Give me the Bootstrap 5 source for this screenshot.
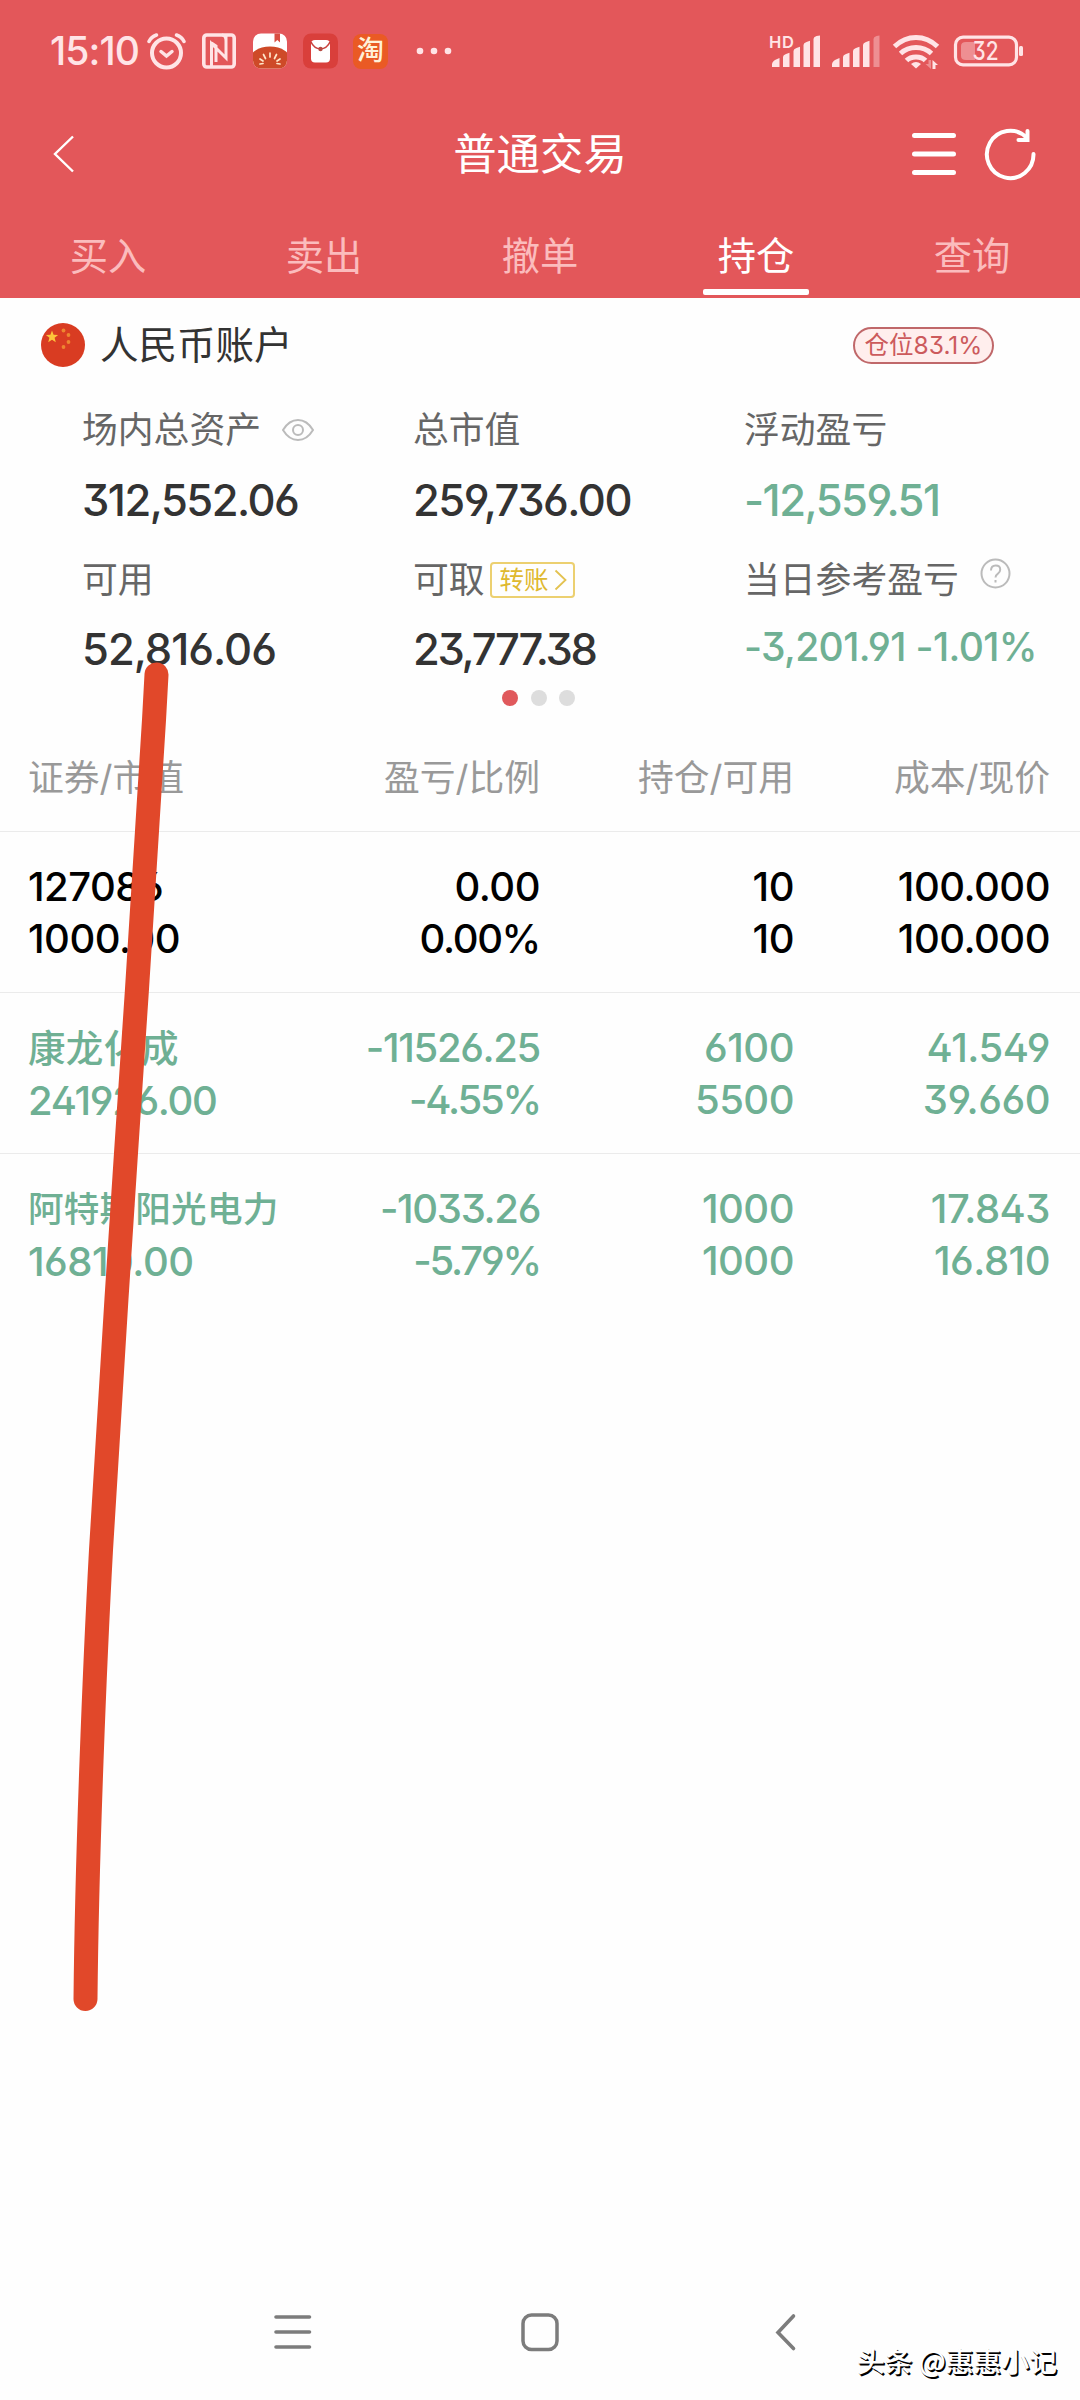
<!DOCTYPE html>
<html lang="zh-CN">
<head>
<meta charset="utf-8">
<meta name="viewport" content="width=device-width, initial-scale=1">
<title>普通交易</title>
<link href="https://cdn.jsdelivr.net/npm/bootstrap@5.3.0/dist/css/bootstrap.min.css" rel="stylesheet">
<style>
body{font-family:Inter,"Noto Sans CJK SC",sans-serif;background:#fefefe;color:#333;font-feature-settings:"ss01","cv03","cv04","cv09"}
svg{display:block;flex:none}
.screen{width:1080px;height:2400px;overflow:hidden}
.topbar{background:#e3575a;color:#fff}
.status{height:102px;padding-left:50px;color:#ffe4e6}
.clock{font-size:39px;font-weight:500;line-height:40px;width:97px;letter-spacing:-.9px}
.app-tao{width:35px;height:35px;border-radius:8px;background:#ea5a24;color:#fff1d8;font-size:27px;line-height:34px;font-weight:500}
.titlebar{height:104px}
.titlebar h1{font-size:43.4px;line-height:60px;font-weight:400}
.tabs{height:92px}
.tabs .nav-link{width:216px;padding:8px 0 0;font-size:38.3px;line-height:40px;color:#fbbcbd;border-radius:0}
.tabs .nav-link.active{color:#fff}
.tabs .nav-link.active::after{content:"";position:absolute;left:55px;bottom:3px;width:106px;height:6px;border-radius:2px;background:#fff}
.account{height:94px;padding:0 86px 0 41px}
.account-name{font-size:38.5px;line-height:44px;margin-left:15px}
.ratio{width:141px;height:37px;border:2px solid #c0686a;background:#ffeeed;color:#cc5a5c;font-size:24.5px;line-height:32px}
.summary{display:grid;grid-template-columns:331px 331px 335px;grid-template-rows:76px 64px 95px 44px;padding-left:82px;align-items:center}
.lbl{font-size:35.8px;line-height:40px;color:#666}
.val{font-size:43.5px;line-height:44px;font-weight:500;white-space:nowrap;letter-spacing:-1.5px}
.val-wide{letter-spacing:-1px}
.val-tight{letter-spacing:-2.3px}
.val-sm{font-size:39px;letter-spacing:-.65px;position:relative;top:-2px}
.fall{color:#6fb094}
.transfer{width:85px;height:36px;border:2px solid #ecd070;border-radius:4px;color:#dfb92f;font-size:24.5px;margin-left:5px;padding-left:8px}
.dots{height:54px;gap:12.3px;padding-right:3px}
.dots i{width:16px;height:16px;background:#ddd}
.dots i.on{background:#e0595c}
.holding{display:grid;grid-template-columns:271px 241px 254px 256px;padding-left:28px;padding-right:29px;border-bottom:1px solid #ebebeb;align-items:center}
.holding>div:not(:first-child){text-align:right}
.holding-head{height:107px;padding-top:2px;font-size:35.8px;color:#999}
.pos{height:161px;padding-top:2px;font-size:40px;font-weight:500;line-height:52px;white-space:nowrap;letter-spacing:-.5px}
.pos:last-child{border-bottom:0;padding-top:0}
.pos .neg{letter-spacing:-1.35px}
.pos .pct{letter-spacing:-2.2px}
.rise0{color:#000}
.nm{font-size:37.5px;letter-spacing:.2px}
.nm-long{font-size:35.6px;letter-spacing:.2px}
.sysnav{height:136px}
.sysnav a{width:247px}
.pen{left:0;top:0;pointer-events:none}
.wm{right:23px;bottom:20px;font-size:27.8px;line-height:40px;color:#fff;font-weight:500;font-family:"Noto Sans CJK SC",sans-serif;text-shadow:1.5px 1.5px 0 #000,.5px .5px 0 #555}
</style>
<script src="https://cdn.jsdelivr.net/npm/bootstrap@5.3.0/dist/js/bootstrap.bundle.min.js"></script>
</head>
<body>
<div class="screen position-relative d-flex flex-column">
  <header class="topbar">
    <div class="status d-flex align-items-center">
      <span class="clock">15:10</span>
      <!-- alarm -->
      <svg width="40" height="40" viewBox="0 0 40 40" fill="none" stroke="currentColor" stroke-linecap="round"><circle cx="19.500" cy="22" r="14.500" stroke-width="4"/><path d="M14 20.500l5.500 4.500 5.500-4.500" stroke-width="3.500"/><path d="M2 10.500Q4 6 9.500 4M37 10.500Q35 6 29.500 4" stroke-width="3.500"/></svg>
      <!-- nfc -->
      <svg style="margin-left:15px" width="34" height="36" viewBox="0 0 34 36" fill="none" stroke="currentColor" stroke-width="3.600"><rect x="1.800" y="2" width="30.400" height="32" rx="3"/><path d="M9.500 34V10.500L24 25V8Q24 2 20 2M24 2.500V25.500M9.500 10L14 13V29" stroke-width="3"/></svg>
      <!-- tomato reader -->
      <svg width="34" height="36" viewBox="0 0 34 36" style="margin-left:17px"><defs><clipPath id="rr"><rect y=".5" width="34" height="35" rx="8"/></clipPath></defs><g clip-path="url(#rr)"><rect width="34" height="36" fill="#fff"/><path d="M21.500 0h5.500v9.500l-2.700-2.500-2.800 2.500z" fill="#d94d42"/><ellipse cx="17" cy="28" rx="21" ry="14.500" fill="#ce4a28"/><path d="M17 20v4M10.500 21.500l2 4M23.500 21.500l-2 4M7 26l3 2M27 26l-3 2M7 31l3-.5M27 31l-3-.5" stroke="#ffe6c8" stroke-width="1.700" stroke-linecap="round"/></g></svg>
      <!-- red packet -->
      <svg width="35" height="36" viewBox="0 0 35 36" style="margin-left:16px"><rect y=".5" width="35" height="35" rx="8" fill="#d93f3b"/><rect x="8" y="7" width="19" height="22.500" rx="4" fill="#fff"/><path d="M8 9q3 6.500 9.500 7 6.500-.5 9.500-7" fill="none" stroke="#c9423d" stroke-width="1.600"/><circle cx="17.500" cy="16" r="2.200" fill="#b84a42"/></svg>
      <span class="app-tao text-center" style="margin-left:15px">淘</span>
      <svg style="margin-left:28px" width="36" height="10" fill="currentColor"><circle cx="4" cy="5" r="3.300"/><circle cx="18" cy="5" r="3.300"/><circle cx="32" cy="5" r="3.300"/></svg>
      <!-- signal, wifi, battery -->
      <svg class="ms-auto" style="margin-right:56px" width="256" height="40" viewBox="768 31 256 40" fill="currentColor">
        <text x="769" y="47.500" font-size="16.500" font-weight="600" textLength="25">HD</text>
        <path d="M772 67V64.500q0-3 4-5l3.500-1.500V67zM783 67V57q0-2 3-3l3.500-1.200V67zM793.500 67V51q0-2 3-3l3.500-1.200V67zM803.500 67V45q0-2 3-3l3.500-1.200V67zM813.500 67V39q0-2 3-3l3.500-.5V67z"/>
        <path d="M832 67V64.500q0-3 4-5l3.500-1.500V67zM843 67V57q0-2 3-3l3.500-1.200V67zM853 67V51q0-2 3-3l3.500-1.200V67zM863 67V45q0-2 3-3l3.500-1.200V67z"/><path d="M873.500 67V39q0-2 3-3l3-.5V67z" opacity=".4"/>
        <g fill="none" stroke="currentColor" stroke-width="5"><path d="M894.500 46.500Q904 37.500 916 37.500t21.500 9M900.500 53.500Q907 47.500 916 47.500T931.500 53.500M906.500 60.500Q910 57 916 57t9.500 3.500"/></g>
        <path d="M911 64q5-4 10 0l-5 4.500z"/><path d="M932.500 69V60l5.500 5h-2.500v4z"/><path d="M931 60v9l-5.500-5h3v-4z" opacity=".4"/>
        <rect x="955.500" y="37.200" width="61" height="27.600" rx="7.500" fill="none" stroke="currentColor" stroke-width="3.200"/><path d="M966 42h9v18h-9q-5 0-5-4V46q0-4 5-4z" opacity=".4"/><rect x="1019" y="46" width="4" height="10" rx="1.500"/>
        <text x="972.500" y="60" font-size="25" font-weight="500" textLength="26" lengthAdjust="spacingAndGlyphs">32</text>
      </svg>
    </div>
    <div class="titlebar position-relative d-flex align-items-center justify-content-center">
      <svg class="position-absolute start-0" style="margin-left:52px" width="24" height="40" fill="none" stroke="#fff" stroke-width="2.400"><path d="M21 2.500L3 20l18 17.500"/></svg>
      <h1 class="m-0">普通交易</h1>
      <svg class="position-absolute end-0" style="margin-right:28px" width="144" height="60" viewBox="908 124 144 60" fill="none" stroke="#fff" stroke-linecap="round"><path d="M914.500 135.500h39M914.500 154h39M914.500 172.500h39" stroke-width="5"/><path d="M1033.500 154A23.300 23.700 0 1 1 1026.500 137.500" stroke-width="4"/><path d="M1027.500 131v9h-9" stroke-width="4"/></svg>
    </div>
    <nav class="tabs nav flex-nowrap text-center">
      <a class="nav-link d-flex align-items-center justify-content-center">买入</a>
      <a class="nav-link d-flex align-items-center justify-content-center">卖出</a>
      <a class="nav-link d-flex align-items-center justify-content-center">撤单</a>
      <a class="nav-link active position-relative d-flex align-items-center justify-content-center">持仓</a>
      <a class="nav-link d-flex align-items-center justify-content-center">查询</a>
    </nav>
  </header>

  <main>
    <section class="account d-flex align-items-center">
      <svg width="44" height="44" viewBox="0 0 44 44"><circle cx="22" cy="22" r="22" fill="#d93c22"/><path d="M11 7.500l1.600 4.300 4.500.2-3.500 2.800 1.200 4.400-3.800-2.500-3.800 2.500 1.200-4.400L4.900 12l4.500-.2z" fill="#fdc43a"/><g fill="#ee8630"><circle cx="22.500" cy="7.500" r="1.900"/><circle cx="27.500" cy="12" r="1.900"/><circle cx="27.500" cy="19" r="1.900"/><circle cx="22.500" cy="24" r="1.900"/></g></svg>
      <span class="account-name">人民币账户</span>
      <span class="ratio rounded-pill text-center ms-auto">仓位83.1%</span>
    </section>

    <section class="summary">
      <div class="lbl d-flex align-items-center">场内总资产
        <svg style="margin-left:20px" width="34" height="26" fill="none" stroke="#bbb" stroke-width="2"><path d="M2 13Q8 3 17 3t15 10Q26 23 17 23T2 13z"/><circle cx="17" cy="13" r="5"/></svg></div>
      <div class="lbl">总市值</div>
      <div class="lbl">浮动盈亏</div>
      <div class="val">312,552.06</div>
      <div class="val">259,736.00</div>
      <div class="val fall">-12,559.51</div>
      <div class="lbl">可用</div>
      <div class="lbl d-flex align-items-center">可取<span class="transfer d-flex align-items-center">转账<svg width="13" height="22" fill="none" stroke="#e3c250" stroke-width="1.800" style="margin-left:5px"><path d="M1.500 1.500L11.500 11l-10 9.500"/></svg></span></div>
      <div class="lbl d-flex align-items-center">当日参考盈亏
        <svg style="margin:-13px 0 0 21px" width="31" height="31" viewBox="0 0 31 31" fill="none" stroke="#bbb" stroke-width="2"><circle cx="15.500" cy="15.500" r="14"/><path d="M11 12.500q0-5 4.700-5t4.500 4.300q0 2.500-2.500 4-2.200 1.400-2.200 3.700"/><path d="M15.500 22v2.500"/></svg></div>
      <div class="val val-wide">52,816.06</div>
      <div class="val val-tight">23,777.38</div>
      <div class="val val-sm fall">-3,201.91 -1.01%</div>
    </section>

    <div class="dots d-flex align-items-center justify-content-center"><i class="on rounded-circle"></i><i class="rounded-circle"></i><i class="rounded-circle"></i></div>

    <section>
      <div class="holding holding-head"><div>证券/市值</div><div>盈亏/比例</div><div>持仓/可用</div><div>成本/现价</div></div>
      <div class="holding pos rise0">
        <div>127086<br>1000.00</div><div>0.00<br><span class="neg">0.00%</span></div><div>10<br>10</div><div>100.000<br>100.000</div>
      </div>
      <div class="holding pos fall">
        <div><span class="nm">康龙化成</span><br><span class="neg">241926.00</span></div><div><span class="neg">-11526.25</span><br><span class="pct">-4.55%</span></div><div>6100<br>5500</div><div>41.549<br>39.660</div>
      </div>
      <div class="holding pos fall">
        <div><span class="nm-long">阿特斯阳光电力</span><br>16810.00</div><div><span class="neg">-1033.26</span><br><span class="pct">-5.79%</span></div><div>1000<br>1000</div><div>17.843<br>16.810</div>
      </div>
    </section>
  </main>

  <footer class="sysnav mt-auto d-flex align-items-center justify-content-center">
    <a class="d-flex justify-content-center"><svg width="38" height="40" stroke="#7c7c7c" stroke-width="3.600" stroke-linecap="round"><path d="M2 5h33.500M2 20h33.500M2 35h33.500"/></svg></a>
    <a class="d-flex justify-content-center"><svg width="38" height="40" fill="none" stroke="#7c7c7c" stroke-width="3.500"><rect x="2" y="3" width="34" height="34.500" rx="8.500"/></svg></a>
    <a class="d-flex justify-content-center"><svg width="24" height="40" fill="none" stroke="#7c7c7c" stroke-width="3.600" stroke-linecap="round"><path d="M18.500 4L3 20.500l15.500 16"/></svg></a>
  </footer>

  <!-- hand-drawn marker stroke over the holdings -->
  <svg class="pen position-absolute" width="240" height="2400" fill="none" stroke="#e1482a" stroke-width="24" stroke-linecap="round" stroke-linejoin="round"><path d="M156.500 674.500L154 720 147 831 136.800 992 126 1153 116.400 1300C109 1410 104 1500 101 1550 95 1660 87 1850 85.500 1999"/></svg>
  <div class="wm position-absolute">头条 @惠惠小记</div>
</div>
</body>
</html>
